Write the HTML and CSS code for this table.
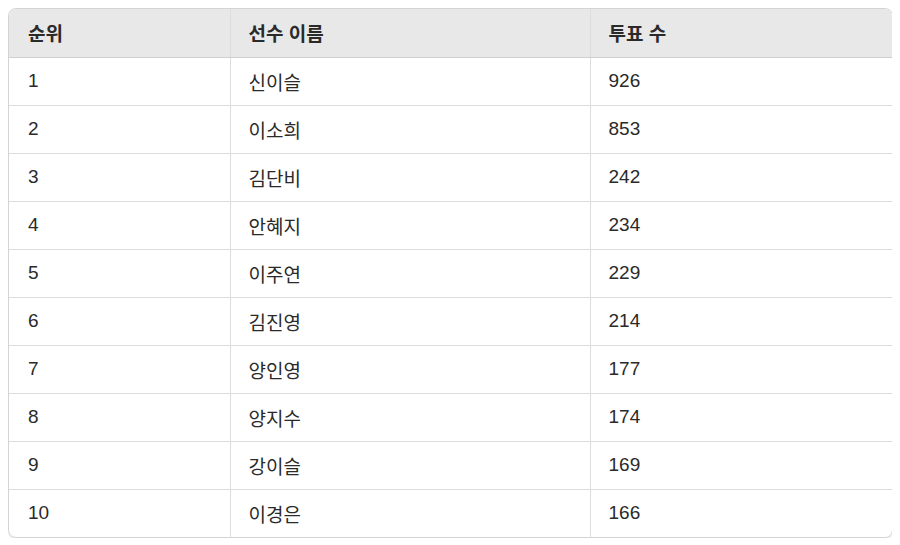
FILE: index.html
```html
<!DOCTYPE html>
<html lang="ko">
<head>
<meta charset="utf-8">
<link rel="stylesheet" href="styles.css">
</head>
<body>
<div class="wrap">
<table class="rank">
<colgroup><col class="c1"><col class="c2"><col class="c3"></colgroup>
<thead><tr><th>순위</th><th>선수 이름</th><th>투표 수</th></tr></thead>
<tbody>
<tr><td>1</td><td>신이슬</td><td>926</td></tr>
<tr><td>2</td><td>이소희</td><td>853</td></tr>
<tr><td>3</td><td>김단비</td><td>242</td></tr>
<tr><td>4</td><td>안혜지</td><td>234</td></tr>
<tr><td>5</td><td>이주연</td><td>229</td></tr>
<tr><td>6</td><td>김진영</td><td>214</td></tr>
<tr><td>7</td><td>양인영</td><td>177</td></tr>
<tr><td>8</td><td>양지수</td><td>174</td></tr>
<tr><td>9</td><td>강이슬</td><td>169</td></tr>
<tr><td>10</td><td>이경은</td><td>166</td></tr>
</tbody>
</table>
</div>
</body>
</html>
```
FILE: styles.css
```css
html, body { background: #fff; }
body { margin: 8px; }
.wrap {
  width: 885px;
  box-sizing: border-box;
  border: 1px solid #d4d4d4;
  border-radius: 8px;
  overflow: hidden;
  box-shadow: 0 1px 2px rgba(0,0,0,0.12);
}
.rank {
  width: 100%;
  border-collapse: collapse;
  font-family: "Liberation Sans", "Noto Sans CJK KR", sans-serif;
  font-size: 19px;
  color: #2a2a2a;
}
.c1 { width: 221px; }
.c2 { width: 360px; }
.rank th, .rank td {
  height: 48px;
  padding: 0 18px;
  text-align: left;
  border: 1px solid #dcdcdc;
  box-sizing: border-box;
}
.rank td:first-child, .rank th:first-child { padding-left: 19px; }
.rank tr > :first-child { border-left: none; }
.rank tr > :last-child { border-right: none; }
.rank thead th { border-top: none; background: #e8e8e8; font-weight: bold; border-bottom-color: #cfcfcf; }
.rank tbody tr:last-child td { border-bottom: none; }
```
